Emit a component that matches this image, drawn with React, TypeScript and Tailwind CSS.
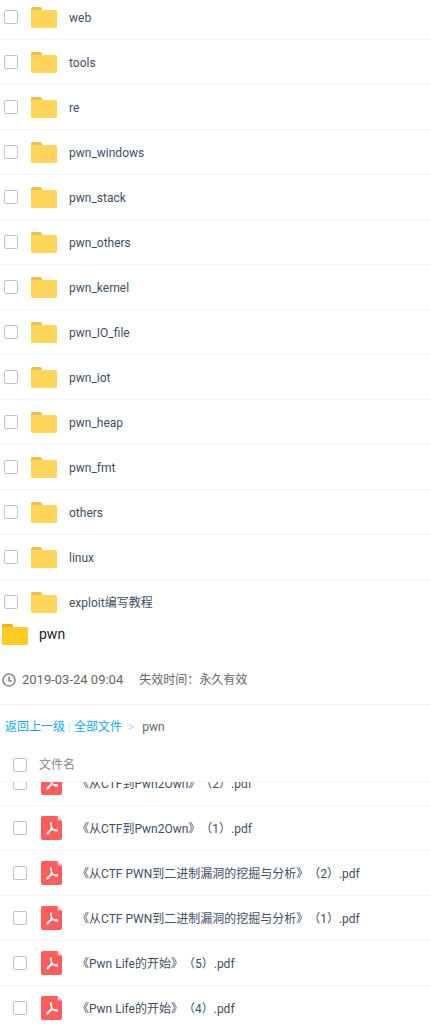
const folders = ['web', 'tools', 're', 'pwn_windows', 'pwn_stack', 'pwn_others', 'pwn_kernel', 'pwn_IO_file', 'pwn_iot', 'pwn_heap', 'pwn_fmt', 'others', 'linux', 'exploit编写教程']

const files = [
  '《从CTF到Pwn2Own》（2）.pdf',
  '《从CTF到Pwn2Own》（1）.pdf',
  '《从CTF PWN到二进制漏洞的挖掘与分析》（2）.pdf',
  '《从CTF PWN到二进制漏洞的挖掘与分析》（1）.pdf',
  '《Pwn Life的开始》（5）.pdf',
  '《Pwn Life的开始》（4）.pdf',
]

function Checkbox() {
  return <div className="h-[14px] w-[14px] shrink-0 rounded-[2px] border border-[#b8c4d4] bg-white" />
}

function FolderIcon({ bright = false }: { bright?: boolean }) {
  return (
    <svg width="26" height="21" viewBox="0 0 26 21" className="shrink-0">
      <path d="M0 2a2 2 0 0 1 2-2h7a2 2 0 0 1 2 2v2H0z" fill={bright ? '#f0b400' : '#eebf4e'} />
      <rect x="0" y="3" width="26" height="18" rx="1.5" fill={bright ? '#ffcb24' : '#ffd659'} />
    </svg>
  )
}

function PdfIcon() {
  return (
    <svg width="21" height="24" viewBox="0 0 21 24" className="shrink-0">
      <path d="M2 0h14.5L21 4.5V22a2 2 0 0 1-2 2H2a2 2 0 0 1-2-2V2a2 2 0 0 1 2-2z" fill="#ff5c5c" />
      <path d="M16.5 0L21 4.5h-3a1.500 1.500 0 0 1-1.500-1.500z" fill="#ffc4c4" />
      <path
        d="M10 6.500c-.8 0-.9 1.200.1 3.400.6 1.400 1.900 3.300 3 4.300 1 .9 3.200 1.400 3.400.4.2-1-2.200-1.300-4.300-1-2.200.3-4.500 1.300-5.700 2.800-.8 1-.6 2 .2 1.600 1-.5 2.400-2.800 3.100-4.700.7-1.900 1-4.800.2-6.800z"
        fill="none"
        stroke="#fff"
        strokeWidth="1.100"
      />
    </svg>
  )
}

function FolderRow({ name }: { name: string }) {
  return (
    <div className="flex h-[45px] shrink-0 items-center border-b border-[#f2f6fd] pl-1">
      <Checkbox />
      <div className="ml-[13px]">
        <FolderIcon />
      </div>
      <span className="ml-3 pt-[2px] text-xs text-[#424e67]">{name}</span>
    </div>
  )
}

function FileRow({ name }: { name: string }) {
  return (
    <div className="flex h-[45px] shrink-0 items-center border-b border-[#f2f6fd] pl-[13px]">
      <Checkbox />
      <div className="ml-[14px]">
        <PdfIcon />
      </div>
      <span className="ml-[15px] pt-[2px] text-xs text-[#424e67]">{name}</span>
    </div>
  )
}

export default function App() {
  return (
    <div className="h-[1027px] overflow-hidden bg-white font-['Roboto','Noto_Sans_CJK_SC',sans-serif] [text-spacing-trim:space-all]">
      <div className="h-[618px] overflow-hidden">
        <div className="-mt-[5px]">
          {folders.map((name) => (
            <FolderRow key={name} name={name} />
          ))}
        </div>
      </div>
      <div className="flex h-[32px] items-center pl-[2px]">
        <FolderIcon bright />
        <span className="ml-[11px] text-sm text-[#222]">pwn</span>
      </div>
      <div className="mt-[14px] flex h-[41px] items-center border-b border-[#f1f2f4] pb-[8px] pl-[2px] text-xs text-[#666]">
        <svg width="14" height="14" viewBox="0 0 14 14" className="shrink-0">
          <circle cx="7" cy="7" r="6" fill="none" stroke="#8c8c8c" strokeWidth="1.700" />
          <path d="M7 3.500V8H10" fill="none" stroke="#8c8c8c" strokeWidth="1.700" />
        </svg>
        <span className="ml-[6px] text-[13px]">2019-03-24 09:04</span>
        <span className="ml-4">失效时间：永久有效</span>
      </div>
      <div className="flex h-[43px] items-center pl-[5px] text-xs">
        <span className="text-[#09aaff]">返回上一级</span>
        <span className="mx-[3px] text-[#c7e6fb]">|</span>
        <span className="text-[#09aaff]">全部文件</span>
        <span className="ml-[6px] mr-2 text-[#c5d0dc]">&gt;</span>
        <span className="text-[#666]">pwn</span>
      </div>
      <div className="flex h-[34px] items-center border-b border-[#f2f6fd] pl-[13px]">
        <Checkbox />
        <span className="ml-3 text-xs text-[#888]">文件名</span>
      </div>
      <div className="h-[245px] overflow-hidden">
        <div className="-mt-[21px]">
          {files.map((name) => (
            <FileRow key={name} name={name} />
          ))}
        </div>
      </div>
    </div>
  )
}
